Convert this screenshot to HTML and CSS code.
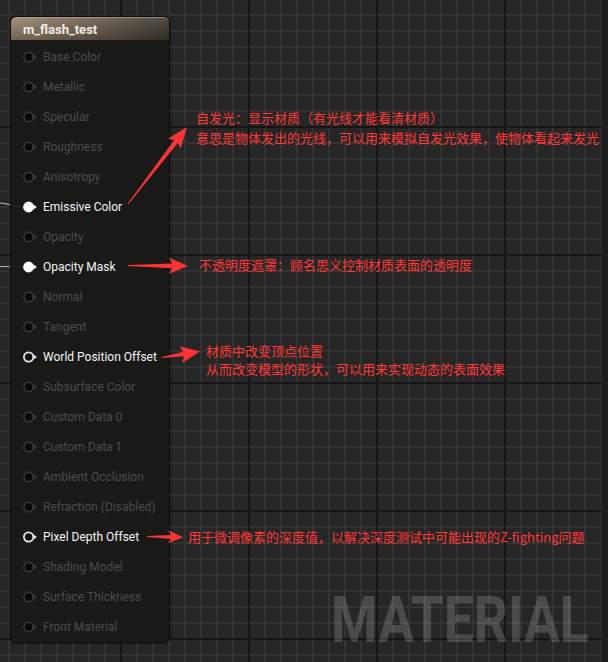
FILE: index.html
```html
<!DOCTYPE html>
<html lang="zh">
<head>
<meta charset="utf-8">
<title>m_flash_test</title>
<link rel="stylesheet" href="styles.css">
</head>
<body>
<div class="canvas">
  <svg class="wires" width="608" height="662" viewBox="0 0 608 662">
    <path d="M0 203 C 9 203.5, 14 207, 26 207" />
    <path d="M0 266.5 L26 267" />
  </svg>

  <div class="node">
    <div class="node-header">m_flash_test</div>
    <ul class="pins">
      <li class="pin off"><svg class="pin-icon" viewBox="0 0 16 12"><circle cx="5.6" cy="6" r="4.7"/><path d="M10.6 3.4 L13.9 6 L10.6 8.6 Z"/></svg><span>Base Color</span></li>
      <li class="pin off"><svg class="pin-icon" viewBox="0 0 16 12"><circle cx="5.6" cy="6" r="4.7"/><path d="M10.6 3.4 L13.9 6 L10.6 8.6 Z"/></svg><span>Metallic</span></li>
      <li class="pin off"><svg class="pin-icon" viewBox="0 0 16 12"><circle cx="5.6" cy="6" r="4.7"/><path d="M10.6 3.4 L13.9 6 L10.6 8.6 Z"/></svg><span>Specular</span></li>
      <li class="pin off"><svg class="pin-icon" viewBox="0 0 16 12"><circle cx="5.6" cy="6" r="4.7"/><path d="M10.6 3.4 L13.9 6 L10.6 8.6 Z"/></svg><span>Roughness</span></li>
      <li class="pin off"><svg class="pin-icon" viewBox="0 0 16 12"><circle cx="5.6" cy="6" r="4.7"/><path d="M10.6 3.4 L13.9 6 L10.6 8.6 Z"/></svg><span>Anisotropy</span></li>
      <li class="pin linked"><svg class="pin-icon" viewBox="0 0 16 12"><circle cx="5.6" cy="6" r="4.7"/><path d="M10.6 3.4 L13.9 6 L10.6 8.6 Z"/></svg><span>Emissive Color</span></li>
      <li class="pin off"><svg class="pin-icon" viewBox="0 0 16 12"><circle cx="5.6" cy="6" r="4.7"/><path d="M10.6 3.4 L13.9 6 L10.6 8.6 Z"/></svg><span>Opacity</span></li>
      <li class="pin linked"><svg class="pin-icon" viewBox="0 0 16 12"><circle cx="5.6" cy="6" r="4.7"/><path d="M10.6 3.4 L13.9 6 L10.6 8.6 Z"/></svg><span>Opacity Mask</span></li>
      <li class="pin off"><svg class="pin-icon" viewBox="0 0 16 12"><circle cx="5.6" cy="6" r="4.7"/><path d="M10.6 3.4 L13.9 6 L10.6 8.6 Z"/></svg><span>Normal</span></li>
      <li class="pin off"><svg class="pin-icon" viewBox="0 0 16 12"><circle cx="5.6" cy="6" r="4.7"/><path d="M10.6 3.4 L13.9 6 L10.6 8.6 Z"/></svg><span>Tangent</span></li>
      <li class="pin open"><svg class="pin-icon" viewBox="0 0 16 12"><circle cx="5.6" cy="6" r="4.7"/><path d="M10.6 3.4 L13.9 6 L10.6 8.6 Z"/></svg><span>World Position Offset</span></li>
      <li class="pin off"><svg class="pin-icon" viewBox="0 0 16 12"><circle cx="5.6" cy="6" r="4.7"/><path d="M10.6 3.4 L13.9 6 L10.6 8.6 Z"/></svg><span>Subsurface Color</span></li>
      <li class="pin off"><svg class="pin-icon" viewBox="0 0 16 12"><circle cx="5.6" cy="6" r="4.7"/><path d="M10.6 3.4 L13.9 6 L10.6 8.6 Z"/></svg><span>Custom Data 0</span></li>
      <li class="pin off"><svg class="pin-icon" viewBox="0 0 16 12"><circle cx="5.6" cy="6" r="4.7"/><path d="M10.6 3.4 L13.9 6 L10.6 8.6 Z"/></svg><span>Custom Data 1</span></li>
      <li class="pin off"><svg class="pin-icon" viewBox="0 0 16 12"><circle cx="5.6" cy="6" r="4.7"/><path d="M10.6 3.4 L13.9 6 L10.6 8.6 Z"/></svg><span>Ambient Occlusion</span></li>
      <li class="pin off"><svg class="pin-icon" viewBox="0 0 16 12"><circle cx="5.6" cy="6" r="4.7"/><path d="M10.6 3.4 L13.9 6 L10.6 8.6 Z"/></svg><span>Refraction (Disabled)</span></li>
      <li class="pin open"><svg class="pin-icon" viewBox="0 0 16 12"><circle cx="5.6" cy="6" r="4.7"/><path d="M10.6 3.4 L13.9 6 L10.6 8.6 Z"/></svg><span>Pixel Depth Offset</span></li>
      <li class="pin off"><svg class="pin-icon" viewBox="0 0 16 12"><circle cx="5.6" cy="6" r="4.7"/><path d="M10.6 3.4 L13.9 6 L10.6 8.6 Z"/></svg><span>Shading Model</span></li>
      <li class="pin off"><svg class="pin-icon" viewBox="0 0 16 12"><circle cx="5.6" cy="6" r="4.7"/><path d="M10.6 3.4 L13.9 6 L10.6 8.6 Z"/></svg><span>Surface Thickness</span></li>
      <li class="pin off"><svg class="pin-icon" viewBox="0 0 16 12"><circle cx="5.6" cy="6" r="4.7"/><path d="M10.6 3.4 L13.9 6 L10.6 8.6 Z"/></svg><span>Front Material</span></li>
    </ul>
  </div>

  <div class="watermark">MATERIAL</div>

  <svg class="arrows" width="608" height="662" viewBox="0 0 608 662">
    <polygon transform="translate(128 204) rotate(-52.5)" points="0,-0.5 79,-2.3 76,-8 97,0 76,8 79,2.3 0,0.5"/>
    <polygon transform="translate(128 265.5) rotate(0.5)" points="0,-0.5 44,-2.3 41,-8 60,0 41,8 44,2.3 0,0.5"/>
    <polygon transform="translate(162 357.5) rotate(-9)" points="0,-0.5 22,-2.3 19,-8.5 38.5,0 19,8.5 22,2.3 0,0.5"/>
    <polygon transform="translate(147 536.5) rotate(1)" points="0,-0.5 24,-2 21,-6.5 36,0 21,6.5 24,2 0,0.5"/>
  </svg>

  <div class="note note-emissive">
    <p>自发光：显示材质（有光线才能看清材质）</p>
    <p>意思是物体发出的光线，可以用来模拟自发光效果，使物体看起来发光</p>
  </div>
  <div class="note note-mask">
    <p>不透明度遮罩：顾名思义控制材质表面的透明度</p>
  </div>
  <div class="note note-wpo">
    <p>材质中改变顶点位置</p>
    <p>从而改变模型的形状，可以用来实现动态的表面效果</p>
  </div>
  <div class="note note-pdo">
    <p>用于微调像素的深度值，以解决深度测试中可能出现的Z-fighting问题</p>
  </div>

  <div class="edge"></div>
</div>
</body>
</html>
```

FILE: styles.css
```css
html, body {
  margin: 0;
  padding: 0;
}

body {
  width: 608px;
  height: 662px;
  overflow: hidden;
  background: #262626;
  font-family: Roboto, "Noto Sans", sans-serif;
}

.canvas {
  position: relative;
  width: 608px;
  height: 662px;
  background-color: #262626;
  background-image:
    linear-gradient(to right, #161616 2px, transparent 2px),
    linear-gradient(to bottom, #161616 2px, transparent 2px),
    linear-gradient(to right, #333333 2px, transparent 2px),
    linear-gradient(to bottom, #333333 2px, transparent 2px);
  background-size: 128px 128px, 128px 128px, 16px 16px, 16px 16px;
  background-position: 120px 0, 0 126px, 8px 0, 0 14px;
}

/* ---------- node ---------- */
.node {
  position: absolute;
  left: 10px;
  top: 16px;
  width: 160px;
  box-sizing: border-box;
  border: 1px solid #0d0d0d;
  border-radius: 6px;
  background: rgba(25, 26, 24, 0.93);
  box-shadow: 0 0 3px rgba(0, 0, 0, 0.6);
  overflow: hidden;
  z-index: 1;
}

.node-header {
  height: 22px;
  padding-left: 12px;
  display: flex;
  align-items: center;
  font-weight: 700;
  font-size: 13px;
  color: #f1ede6;
  border-top: 1px solid rgba(230, 210, 185, 0.55);
  border-radius: 5px 5px 0 0;
  background:
    linear-gradient(to bottom, rgba(255, 255, 255, 0.08), rgba(0, 0, 0, 0.25)),
    linear-gradient(to right, #9a876f 0%, #7e6e5c 35%, #5c5247 70%, #3e3933 100%);
}

.pins {
  list-style: none;
  margin: 0;
  padding: 2px 0 0 0;
}

.pin {
  height: 30px;
  display: flex;
  align-items: center;
  padding-left: 12px;
  font-size: 12px;
  color: #4b4b4b;
}

.pin-icon {
  width: 16px;
  height: 12px;
  margin-right: 4px;
  flex: none;
}

.pin-icon circle {
  stroke-width: 1.5;
}

.pin.off .pin-icon circle {
  fill: #090909;
  stroke: #3c3c3c;
}
.pin.off .pin-icon path {
  fill: #3c3c3c;
}

.pin.linked,
.pin.open {
  color: #f4f4f4;
}

.pin.linked .pin-icon circle {
  fill: #ffffff;
  stroke: #ffffff;
}
.pin.linked .pin-icon path {
  fill: #ffffff;
}

.pin.open .pin-icon circle {
  fill: #111111;
  stroke: #e6e6e6;
  stroke-width: 1.8;
}
.pin.open .pin-icon path {
  fill: #e6e6e6;
}

/* ---------- overlays ---------- */
.wires,
.arrows {
  position: absolute;
  left: 0;
  top: 0;
  pointer-events: none;
}

.wires {
  z-index: 0;
}

.wires path {
  fill: none;
  stroke: #b8b8b8;
  stroke-width: 1.2;
}

.arrows {
  z-index: 3;
}

.arrows polygon {
  fill: #fa3434;
}

.watermark {
  position: absolute;
  left: 331px;
  top: 588px;
  z-index: 2;
  font-family: Roboto, "Liberation Sans", sans-serif;
  font-weight: 700;
  font-size: 65px;
  line-height: 65px;
  color: rgba(255, 255, 255, 0.17);
  transform: scaleX(0.82);
  transform-origin: 0 0;
  white-space: nowrap;
}

.note {
  position: absolute;
  z-index: 4;
  font-family: "Noto Sans CJK SC", "Microsoft YaHei", sans-serif;
  font-size: 13px;
  color: #ff3838;
  white-space: nowrap;
}

.note p {
  margin: 0;
}

.note-emissive {
  left: 196px;
  top: 108px;
  line-height: 20px;
}

.note-mask {
  left: 199px;
  top: 255px;
  line-height: 20px;
}

.note-wpo {
  left: 206px;
  top: 342px;
  line-height: 18px;
}

.note-pdo {
  left: 188px;
  top: 527px;
  line-height: 20px;
}

.edge {
  position: absolute;
  right: 0;
  top: 0;
  width: 7px;
  height: 662px;
  z-index: 5;
  background: #1f1f1f;
}
```
